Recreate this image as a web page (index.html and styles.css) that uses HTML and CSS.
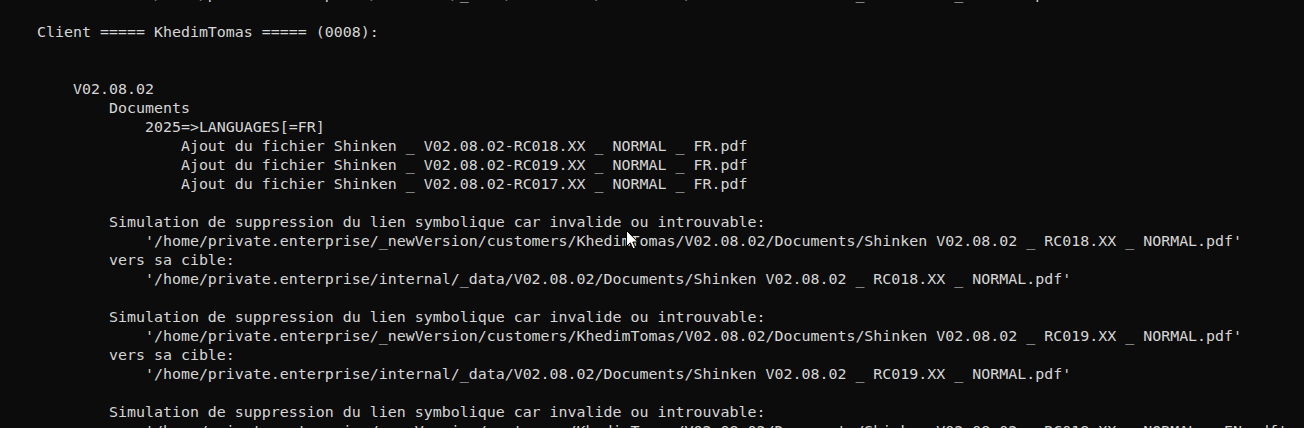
FILE: index.html
```html
<!DOCTYPE html>
<html lang="fr">
<head>
<meta charset="utf-8">
<title>Terminal</title>
<link rel="stylesheet" href="styles.css">
</head>
<body>
<main class="terminal">
<pre class="output">            '/home/private.enterprise/internal/_data/V02.08.02/Documents/Shinken V02.08.02 _ RC019.XX _ NORMAL.pdf'

Client ===== KhedimTomas ===== (0008):


    V02.08.02
        Documents
            2025=&gt;LANGUAGES[=FR]
                Ajout du fichier Shinken _ V02.08.02-RC018.XX _ NORMAL _ FR.pdf
                Ajout du fichier Shinken _ V02.08.02-RC019.XX _ NORMAL _ FR.pdf
                Ajout du fichier Shinken _ V02.08.02-RC017.XX _ NORMAL _ FR.pdf

        Simulation de suppression du lien symbolique car invalide ou introuvable:
            '/home/private.enterprise/_newVersion/customers/KhedimTomas/V02.08.02/Documents/Shinken V02.08.02 _ RC018.XX _ NORMAL.pdf'
        vers sa cible:
            '/home/private.enterprise/internal/_data/V02.08.02/Documents/Shinken V02.08.02 _ RC018.XX _ NORMAL.pdf'

        Simulation de suppression du lien symbolique car invalide ou introuvable:
            '/home/private.enterprise/_newVersion/customers/KhedimTomas/V02.08.02/Documents/Shinken V02.08.02 _ RC019.XX _ NORMAL.pdf'
        vers sa cible:
            '/home/private.enterprise/internal/_data/V02.08.02/Documents/Shinken V02.08.02 _ RC019.XX _ NORMAL.pdf'

        Simulation de suppression du lien symbolique car invalide ou introuvable:
            '/home/private.enterprise/_newVersion/customers/KhedimTomas/V02.08.02/Documents/Shinken V02.08.02 _ RC018.XX _ NORMAL _ EN.pdf'</pre>
<svg class="cursor" width="13" height="20" viewBox="0 0 13 20" aria-hidden="true">
  <path d="M0.5 0.5 L0.5 16.5 L4.3 12.8 L7 18.8 L9.4 17.8 L6.8 12 L11.8 12 Z" fill="#ffffff" stroke="#000000" stroke-width="1" stroke-linejoin="miter"/>
</svg>
</main>
</body>
</html>
```
FILE: styles.css
```css
html, body {
  margin: 0;
  padding: 0;
  background: #0c0c0c;
}

.terminal {
  position: relative;
  width: 1304px;
  height: 428px;
  overflow: hidden;
  background: #0c0c0c;
}

.output {
  margin: -15px 0 0 0;
  padding: 0 0 0 37px;
  font-family: "DejaVu Sans Mono", "Liberation Mono", monospace;
  font-size: 14.95px;
  line-height: 19px;
  color: #d6d6d6;
  white-space: pre;
}

.cursor {
  position: absolute;
  left: 626px;
  top: 230px;
}
```
